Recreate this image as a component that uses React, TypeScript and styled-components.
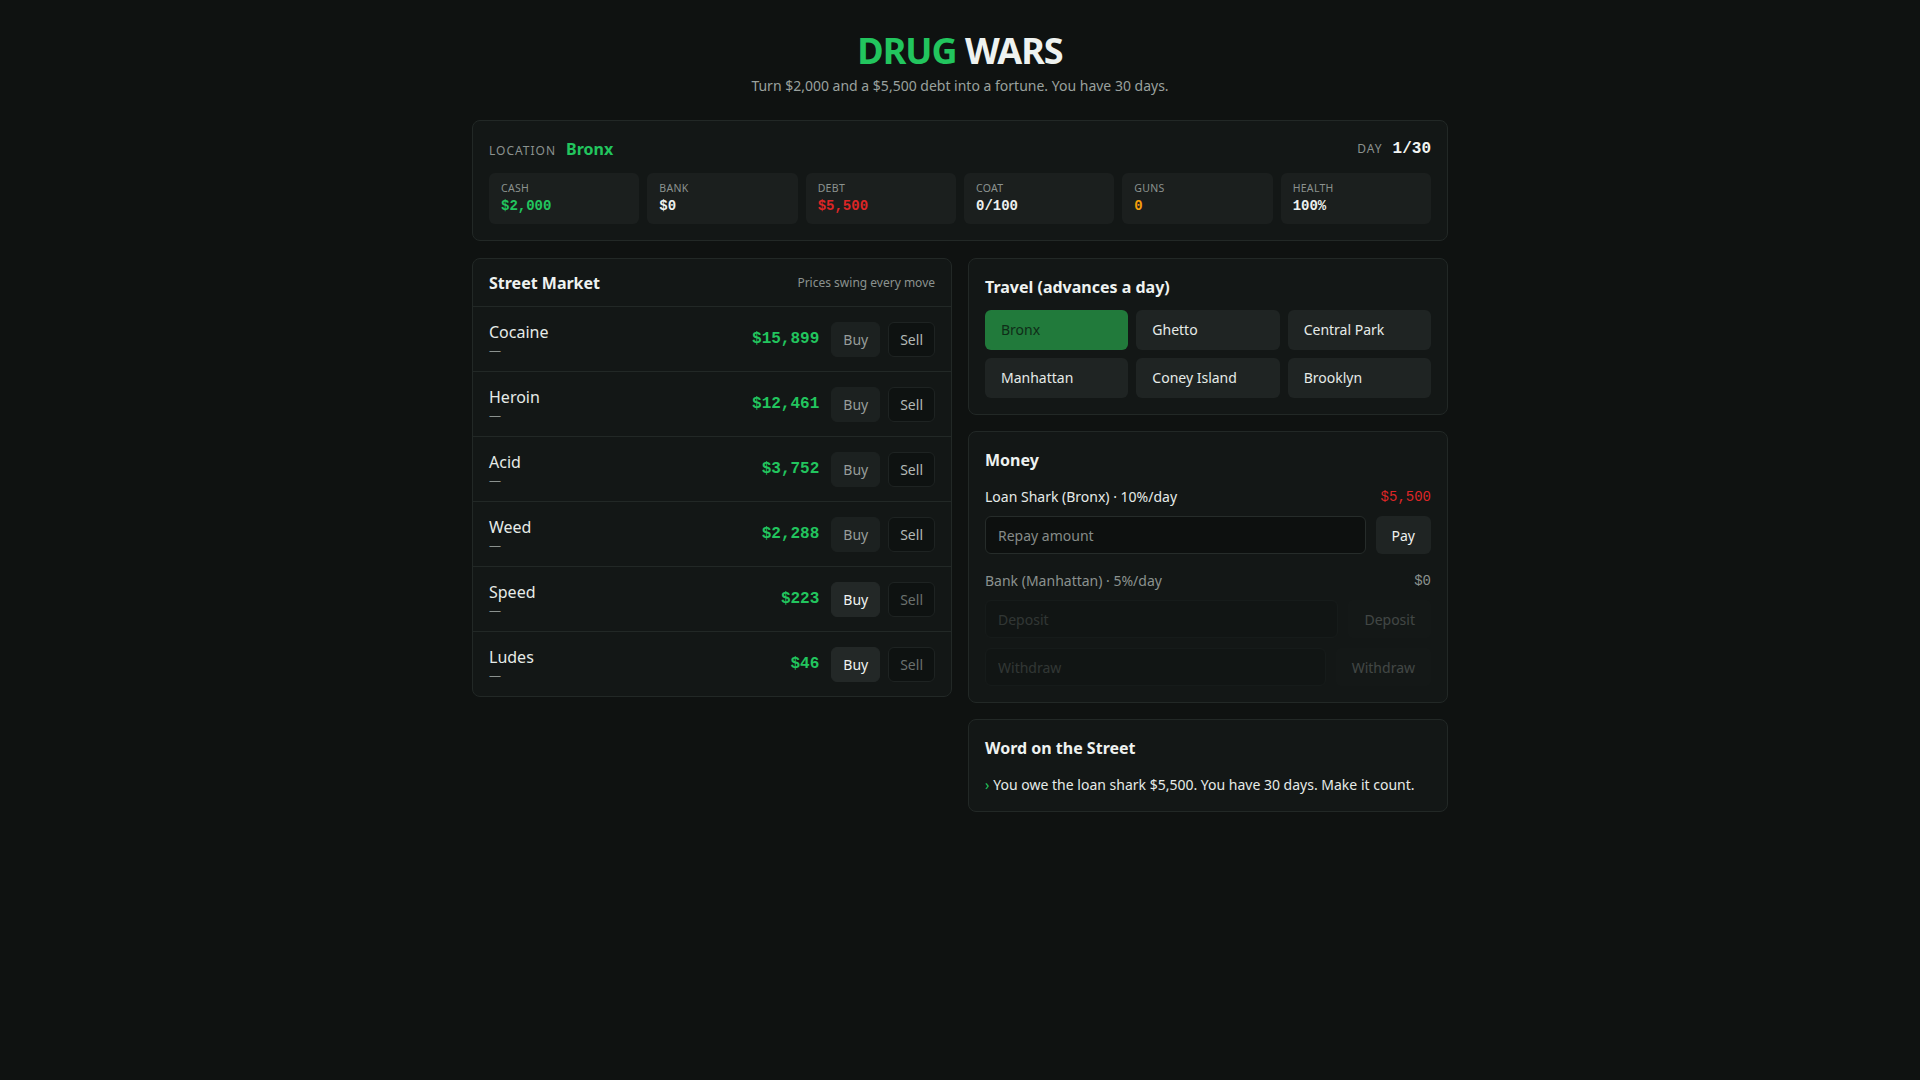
import React from "react";
import styled, { createGlobalStyle, css } from "styled-components";

const C = {
  page: "#0f1211",
  panel: "#131716",
  border: "#222826",
  tile: "#1b1f1e",
  btn: "#222726",
  input: "#0d100f",
  text: "#e6ebe8",
  muted: "#8b928f",
  green: "#22c55e",
  red: "#dc2626",
  orange: "#f59e0b",
};

const mono = `"Liberation Mono", "DejaVu Sans Mono", monospace`;

const Global = createGlobalStyle`
  html, body { margin: 0; padding: 0; background: ${C.page}; }
  body {
    font-family: "Noto Sans", "Open Sans", sans-serif;
    color: ${C.text};
    min-height: 100vh;
  }
  * { box-sizing: border-box; }
`;

const Page = styled.main`
  width: 976px;
  margin: 0 auto;
  padding: 28px 0 40px;
`;

const Header = styled.header`
  text-align: center;
  margin-bottom: 24px;
`;

const Title = styled.h1`
  margin: 0;
  font-size: 36px;
  line-height: 46px;
  font-weight: 700;
  letter-spacing: -1px;
  color: #eef2f0;
`;

const Accent = styled.span`
  color: ${C.green};
`;

const Subtitle = styled.p`
  margin: 2px 0 0;
  font-size: 14px;
  line-height: 20px;
  color: #9aa19e;
`;

const Panel = styled.section<{ $flush?: boolean }>`
  background: ${C.panel};
  border: 1px solid ${C.border};
  border-radius: 8px;
  ${(p) =>
    !p.$flush &&
    css`
      padding: 16px;
    `}
`;

const StatusBar = styled.div`
  display: flex;
  align-items: center;
  justify-content: space-between;
  height: 24px;
  margin-bottom: 12px;
`;

const Pair = styled.div`
  display: flex;
  align-items: baseline;
  gap: 10px;
`;

const Caps = styled.span`
  font-size: 12px;
  letter-spacing: 1px;
  text-transform: uppercase;
  color: ${C.muted};
`;

const LocationName = styled.span`
  font-size: 16px;
  font-weight: 700;
  color: ${C.green};
`;

const DayCount = styled.span`
  font-family: ${mono};
  font-size: 16px;
  font-weight: 700;
  color: #f1f4f2;
`;

const Stats = styled.div`
  display: grid;
  grid-template-columns: repeat(6, 1fr);
  gap: 8px;
`;

const Stat = styled.div`
  background: ${C.tile};
  border-radius: 6px;
  padding: 8px 12px 9px;
  height: 51px;
`;

const StatLabel = styled.div`
  font-size: 10.5px;
  line-height: 14px;
  text-transform: uppercase;
  letter-spacing: 0.3px;
  color: ${C.muted};
`;

type Tone = "green" | "red" | "orange" | "plain";
const toneColor = (t: Tone) =>
  t === "green" ? C.green : t === "red" ? C.red : t === "orange" ? C.orange : "#eef1ef";

const StatValue = styled.div<{ $tone: Tone }>`
  margin-top: 2px;
  font-family: ${mono};
  font-size: 14px;
  line-height: 18px;
  font-weight: 700;
  color: ${(p) => toneColor(p.$tone)};
`;

const Columns = styled.div`
  display: grid;
  grid-template-columns: 1fr 1fr;
  gap: 16px;
  margin-top: 17px;
  align-items: start;
`;

const Stack = styled.div`
  display: flex;
  flex-direction: column;
  gap: 16px;
`;

const MarketHead = styled.div`
  display: flex;
  align-items: center;
  justify-content: space-between;
  height: 48px;
  padding: 0 16px;
  border-bottom: 1px solid ${C.border};
`;

const PanelTitle = styled.h2`
  margin: 0;
  font-size: 16px;
  line-height: 24px;
  font-weight: 700;
  color: #eef2f0;
`;

const Note = styled.span`
  font-size: 12px;
  color: ${C.muted};
`;

const Row = styled.div<{ $last?: boolean }>`
  display: flex;
  align-items: center;
  gap: 12px;
  padding: 13px 16px;
  border-bottom: ${(p) => (p.$last ? "none" : `1px solid ${C.border}`)};
`;

const DrugInfo = styled.div`
  flex: 1;
  display: flex;
  flex-direction: column;
`;

const DrugName = styled.span`
  font-size: 16px;
  line-height: 24px;
  color: ${C.text};
`;

const Held = styled.span`
  font-size: 12px;
  line-height: 14px;
  color: ${C.muted};
`;

const Price = styled.span`
  font-family: ${mono};
  font-size: 16px;
  font-weight: 700;
  color: ${C.green};
`;

const Actions = styled.div`
  display: flex;
  gap: 8px;
`;

const TradeButton = styled.button<{ $kind: "buy" | "sell"; $dim?: boolean }>`
  font-family: inherit;
  font-size: 14px;
  line-height: 19px;
  padding: 7px 11px;
  border-radius: 6px;
  cursor: pointer;
  ${(p) =>
    p.$kind === "buy"
      ? css`
          background: ${p.$dim ? "#1c2120" : "#232827"};
          border: 1px solid ${p.$dim ? "#1c2120" : "#232827"};
          color: ${p.$dim ? "#979d9a" : "#f0f3f1"};
        `
      : css`
          background: #0e1211;
          border: 1px solid #1e2322;
          color: ${p.$dim ? "#6a706d" : "#b3b9b6"};
        `}
`;

const TravelGrid = styled.div`
  display: grid;
  grid-template-columns: repeat(3, 1fr);
  gap: 8px;
  margin-top: 11px;
`;

const TravelButton = styled.button<{ $here?: boolean }>`
  font-family: inherit;
  font-size: 14px;
  line-height: 20px;
  text-align: left;
  padding: 10px 16px;
  border: none;
  border-radius: 6px;
  cursor: pointer;
  background: ${(p) => (p.$here ? "#217a3b" : "#1f2423")};
  color: ${(p) => (p.$here ? "#0f2d18" : "#e6ebe8")};
`;

const LineItem = styled.div<{ $muted?: boolean }>`
  display: flex;
  align-items: center;
  justify-content: space-between;
  font-size: 14px;
  line-height: 20px;
  color: ${(p) => (p.$muted ? C.muted : C.text)};
`;

const Amount = styled.span<{ $tone: "red" | "muted" }>`
  font-family: ${mono};
  font-size: 14px;
  color: ${(p) => (p.$tone === "red" ? C.red : C.muted)};
`;

const FormRow = styled.div<{ $off?: boolean; $gapTop?: number }>`
  display: flex;
  gap: 10px;
  margin-top: ${(p) => p.$gapTop ?? 9}px;
  ${(p) =>
    p.$off &&
    css`
      opacity: 0.35;
    `}
`;

const Field = styled.input`
  flex: 1;
  min-width: 0;
  height: 38px;
  padding: 0 12px;
  font-family: inherit;
  font-size: 14px;
  color: ${C.text};
  background: ${C.input};
  border: 1px solid #262c2a;
  border-radius: 6px;
  outline: none;
  &::placeholder {
    color: #858b88;
  }
  &:disabled {
    background: #101413;
    border-color: #1e2322;
  }
  &:disabled::placeholder {
    color: #6b716e;
  }
`;

const FormButton = styled.button`
  height: 38px;
  padding: 0 16px;
  font-family: inherit;
  font-size: 14px;
  color: #eef1ef;
  background: #1f2423;
  border: none;
  border-radius: 6px;
  cursor: pointer;
  &:disabled {
    background: #181c1b;
    color: #9aa09d;
    cursor: default;
  }
`;

const Section = styled.div<{ $top: number }>`
  margin-top: ${(p) => p.$top}px;
`;

const NewsList = styled.ul`
  list-style: none;
  margin: 15px 0 0;
  padding: 0;
`;

const NewsItem = styled.li`
  font-size: 14px;
  line-height: 20px;
  color: ${C.text};
`;

const Chevron = styled.span`
  color: ${C.green};
  margin-right: 4px;
`;

const stats: { label: string; value: string; tone: Tone }[] = [
  { label: "Cash", value: "$2,000", tone: "green" },
  { label: "Bank", value: "$0", tone: "plain" },
  { label: "Debt", value: "$5,500", tone: "red" },
  { label: "Coat", value: "0/100", tone: "plain" },
  { label: "Guns", value: "0", tone: "orange" },
  { label: "Health", value: "100%", tone: "plain" },
];

const drugs = [
  { name: "Cocaine", price: 15899 },
  { name: "Heroin", price: 12461 },
  { name: "Acid", price: 3752 },
  { name: "Weed", price: 2288 },
  { name: "Speed", price: 223 },
  { name: "Ludes", price: 46 },
];

const places = ["Bronx", "Ghetto", "Central Park", "Manhattan", "Coney Island", "Brooklyn"];

const cash = 2000;
const fmt = (n: number) => "$" + n.toLocaleString("en-US");

export default function App() {
  return (
    <>
      <Global />
      <Page>
        <Header>
          <Title>
            <Accent>DRUG</Accent> WARS
          </Title>
          <Subtitle>Turn $2,000 and a $5,500 debt into a fortune. You have 30 days.</Subtitle>
        </Header>

        <Panel>
          <StatusBar>
            <Pair>
              <Caps>Location</Caps>
              <LocationName>Bronx</LocationName>
            </Pair>
            <Pair>
              <Caps>Day</Caps>
              <DayCount>1/30</DayCount>
            </Pair>
          </StatusBar>
          <Stats>
            {stats.map((s) => (
              <Stat key={s.label}>
                <StatLabel>{s.label}</StatLabel>
                <StatValue $tone={s.tone}>{s.value}</StatValue>
              </Stat>
            ))}
          </Stats>
        </Panel>

        <Columns>
          <Panel $flush>
            <MarketHead>
              <PanelTitle>Street Market</PanelTitle>
              <Note>Prices swing every move</Note>
            </MarketHead>
            {drugs.map((d, i) => {
              const affordable = d.price <= cash;
              return (
                <Row key={d.name} $last={i === drugs.length - 1}>
                  <DrugInfo>
                    <DrugName>{d.name}</DrugName>
                    <Held>—</Held>
                  </DrugInfo>
                  <Price>{fmt(d.price)}</Price>
                  <Actions>
                    <TradeButton $kind="buy" $dim={!affordable}>
                      Buy
                    </TradeButton>
                    <TradeButton $kind="sell" $dim={affordable}>
                      Sell
                    </TradeButton>
                  </Actions>
                </Row>
              );
            })}
          </Panel>

          <Stack>
            <Panel>
              <PanelTitle>Travel (advances a day)</PanelTitle>
              <TravelGrid>
                {places.map((p) => (
                  <TravelButton key={p} $here={p === "Bronx"}>
                    {p}
                  </TravelButton>
                ))}
              </TravelGrid>
            </Panel>

            <Panel>
              <PanelTitle>Money</PanelTitle>
              <Section $top={15}>
                <LineItem>
                  <span>Loan Shark (Bronx) · 10%/day</span>
                  <Amount $tone="red">$5,500</Amount>
                </LineItem>
                <FormRow>
                  <Field placeholder="Repay amount" />
                  <FormButton>Pay</FormButton>
                </FormRow>
              </Section>
              <Section $top={17}>
                <LineItem $muted>
                  <span>Bank (Manhattan) · 5%/day</span>
                  <Amount $tone="muted">$0</Amount>
                </LineItem>
                <FormRow $off>
                  <Field placeholder="Deposit" disabled />
                  <FormButton disabled>Deposit</FormButton>
                </FormRow>
                <FormRow $off $gapTop={10}>
                  <Field placeholder="Withdraw" disabled />
                  <FormButton disabled>Withdraw</FormButton>
                </FormRow>
              </Section>
            </Panel>

            <Panel>
              <PanelTitle>Word on the Street</PanelTitle>
              <NewsList>
                <NewsItem>
                  <Chevron>›</Chevron>You owe the loan shark $5,500. You have 30 days. Make it count.
                </NewsItem>
              </NewsList>
            </Panel>
          </Stack>
        </Columns>
      </Page>
    </>
  );
}
